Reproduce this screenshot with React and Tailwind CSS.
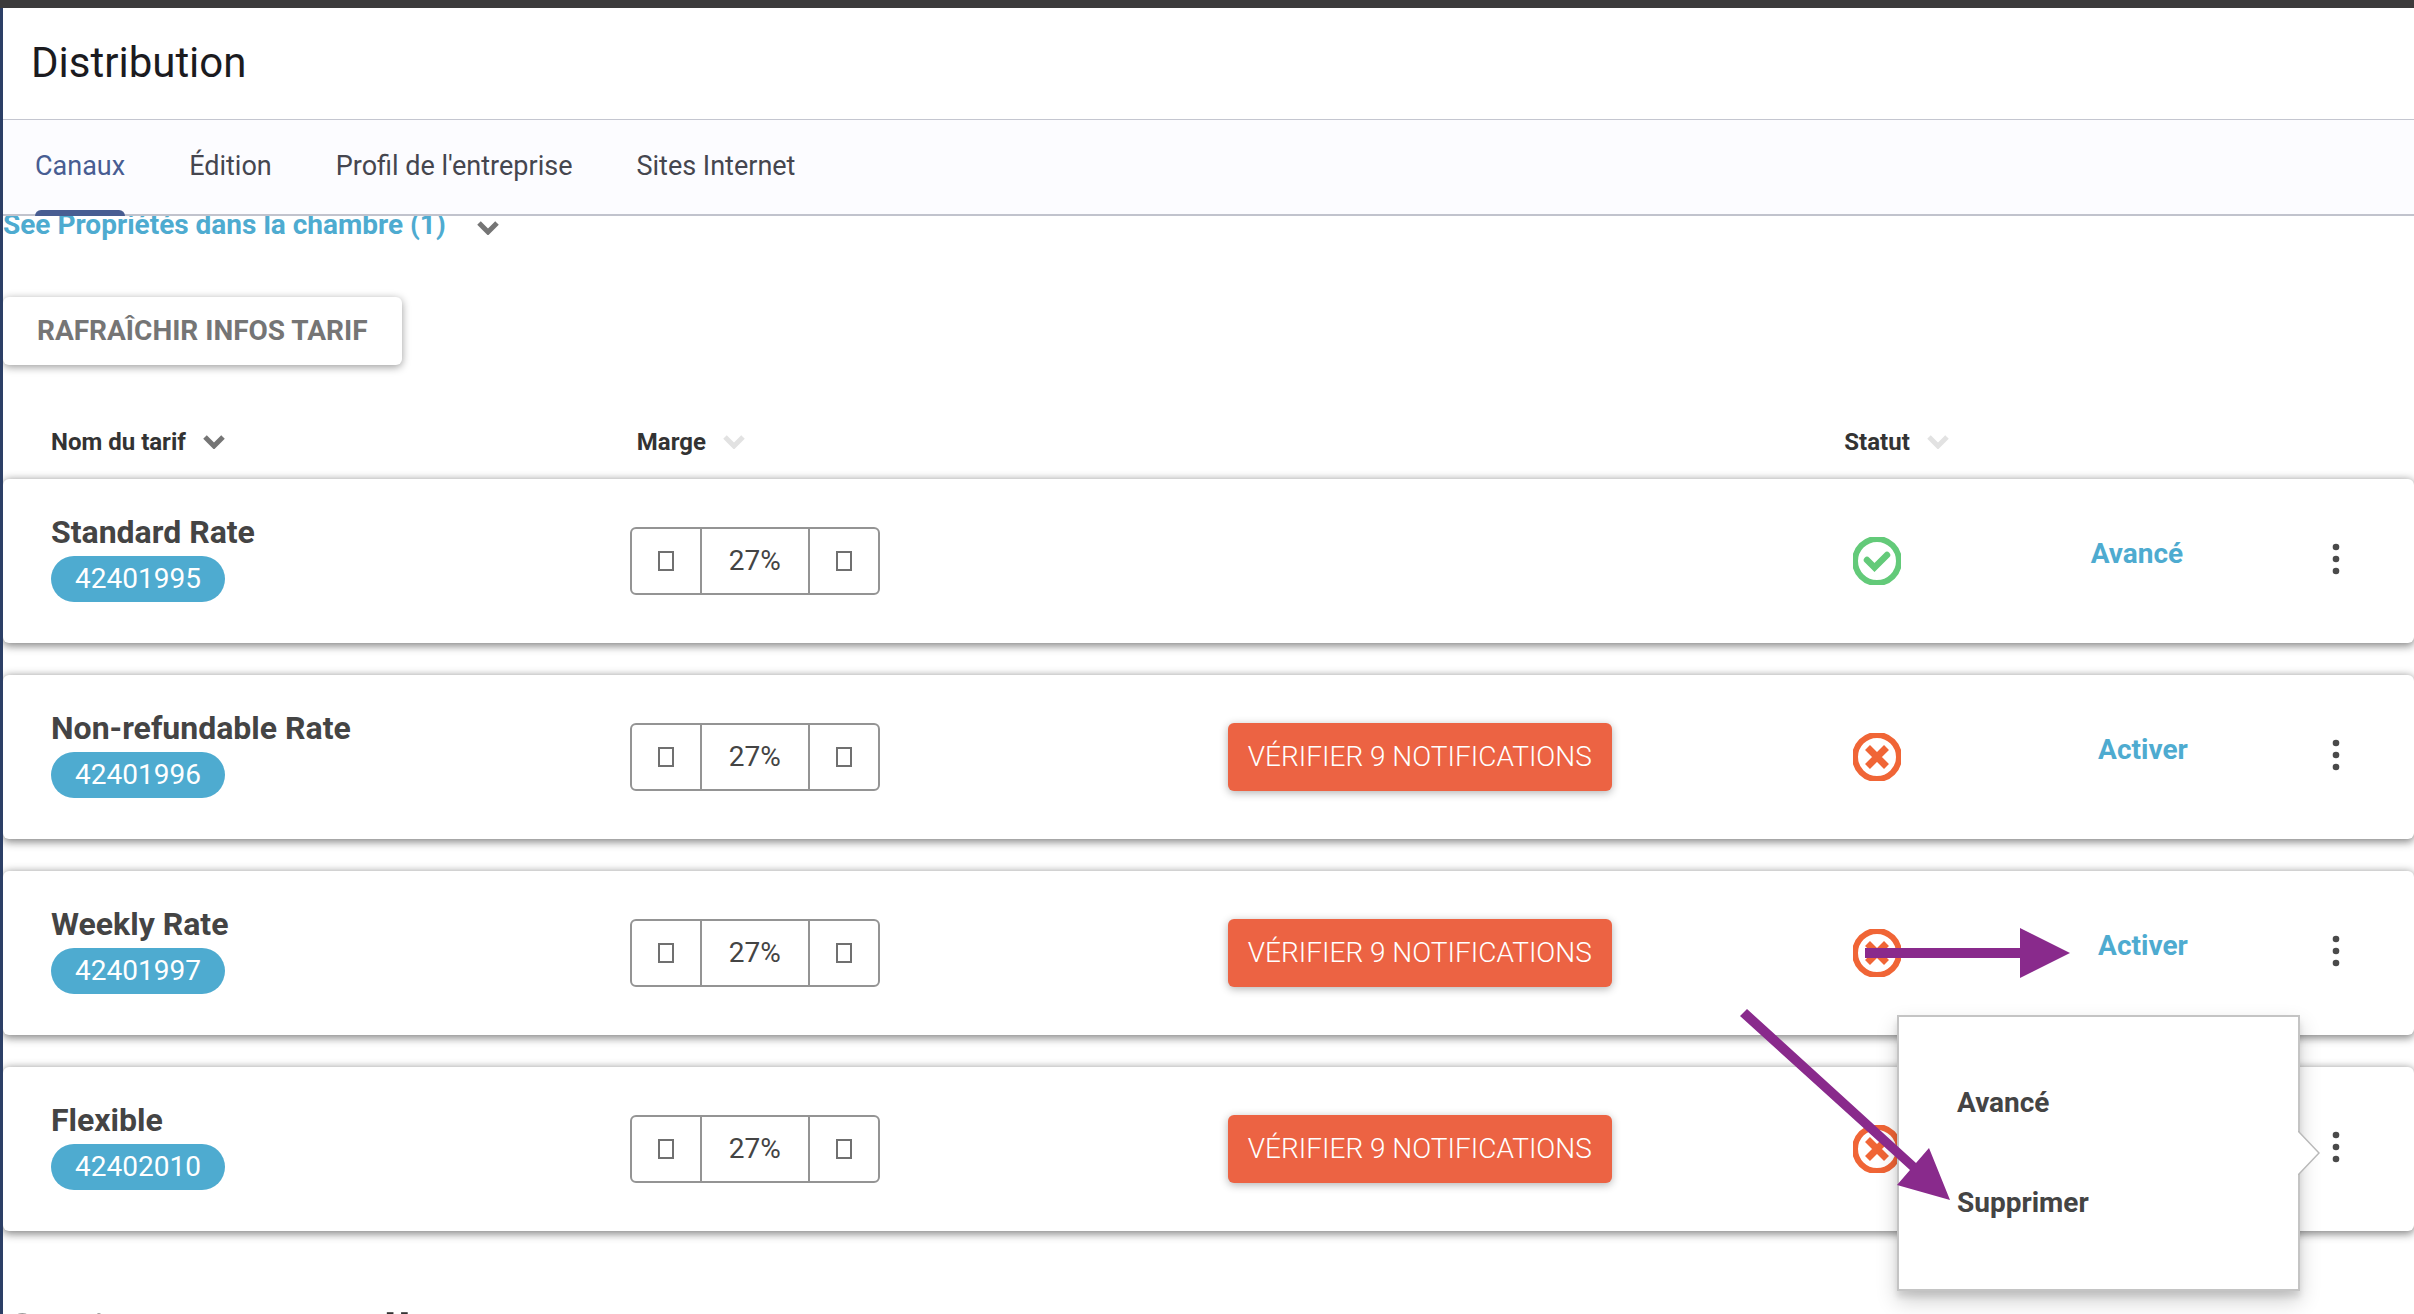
import React, { useState } from "react";

const TABS = ["Canaux", "Édition", "Profil de l'entreprise", "Sites Internet"];

const RATES = [
  { id: "42401995", name: "Standard Rate", margin: 27, active: true, notifications: 0 },
  { id: "42401996", name: "Non-refundable Rate", margin: 27, active: false, notifications: 9 },
  { id: "42401997", name: "Weekly Rate", margin: 27, active: false, notifications: 9 },
  { id: "42402010", name: "Flexible", margin: 27, active: false, notifications: 9 },
];

const Chevron = ({ className }) => (
  <svg className={className} width="24" height="14" viewBox="0 0 24 14" fill="none" aria-hidden="true">
    <path d="M3 2l9 9 9-9" stroke="currentColor" strokeWidth="5" />
  </svg>
);

const StatusIcon = ({ active }) =>
  active ? (
    <svg className="text-[#63ca79]" width="48" height="48" viewBox="0 0 48 48" fill="none" role="img" aria-label="Actif">
      <circle cx="24" cy="24" r="22" stroke="currentColor" strokeWidth="6" />
      <path d="M14 23l7.5 7.5 12.5-12.5" stroke="currentColor" strokeWidth="6.5" strokeLinecap="round" />
    </svg>
  ) : (
    <svg className="text-[#f06536]" width="48" height="48" viewBox="0 0 48 48" fill="none" role="img" aria-label="Inactif">
      <circle cx="24" cy="24" r="22" stroke="currentColor" strokeWidth="6" />
      <path d="M14.5 14.5l19 19M33.5 14.5l-19 19" stroke="currentColor" strokeWidth="7" />
    </svg>
  );

const SortHeader = ({ label, sorted }) => (
  <button className="flex h-[14px] items-center gap-4 pt-[3px] leading-[14px] font-bold">
    {label}
    <Chevron className={sorted ? "text-[#757575]" : "text-[#e2e2e2]"} />
  </button>
);

const MarginStepper = ({ value }) => (
  <div className="flex h-[68px] w-[250px] divide-x-2 divide-[#949494] rounded-md border-2 border-[#949494]">
    <button className="flex w-[70px] items-center justify-center" aria-label="Diminuer la marge">
      <span className="h-5 w-4 border-2 border-[#707070]" />
    </button>
    <span className="flex flex-1 items-center justify-center text-[28px]">{value}%</span>
    <button className="flex w-[68px] items-center justify-center" aria-label="Augmenter la marge">
      <span className="h-5 w-4 border-2 border-[#707070]" />
    </button>
  </div>
);

const RateMenu = () => (
  <div className="absolute -top-[52px] right-[114px] z-10 flex h-[276px] w-[403px] flex-col items-start justify-center gap-[68px] border-2 border-[#c4c4c4] bg-white pl-[58px] shadow-[0_10px_20px_rgba(0,0,0,0.19),0_6px_6px_rgba(0,0,0,0.1)]">
    <button className="text-[28px] leading-8 font-bold">Avancé</button>
    <button className="text-[28px] leading-8 font-bold">Supprimer</button>
    <svg className="absolute top-[114px] -right-[22px]" width="22" height="44" viewBox="0 0 22 44" aria-hidden="true">
      <path d="M0 0L21 22L0 44" fill="#fff" stroke="#b9b9b9" strokeWidth="1.5" />
    </svg>
  </div>
);

const RateRow = ({ rate, menuOpen, onToggleMenu }) => (
  <tr className="h-[164px] rounded-md shadow-[0_4px_8px_rgba(0,0,0,0.3),0_0_8px_rgba(0,0,0,0.3)]">
    <td className="p-0 pb-1 pl-12">
      <div className="text-[32px] leading-8 font-bold">{rate.name}</div>
      <span className="mt-2 flex h-[46px] w-fit items-center rounded-full bg-[#4eabd0] px-6 text-[28px] text-white">
        {rate.id}
      </span>
    </td>
    <td className="p-0">
      <MarginStepper value={rate.margin} />
    </td>
    <td className="p-0">
      {rate.notifications > 0 && (
        <button className="h-[68px] rounded-md bg-[#ec6343] px-5 text-[28px] font-light text-white uppercase shadow-[0_2px_8px_rgba(0,0,0,0.3)]">
          Vérifier {rate.notifications} notifications
        </button>
      )}
    </td>
    <td className="p-0 pl-[18px]">
      <StatusIcon active={rate.active} />
    </td>
    <td className={rate.active ? "p-0 pr-[14px] pb-[14px] text-center" : "p-0 pr-[2px] pb-[14px] text-center"}>
      <button className="text-[28px] leading-8 font-bold text-[#4eabd0]">
        {rate.active ? "Avancé" : "Activer"}
      </button>
    </td>
    <td className="relative p-0 pb-1 pl-[84px]">
      <button className="flex h-12 w-6 items-center justify-center" aria-label="Plus d'options" onClick={onToggleMenu}>
        <svg width="8" height="34" viewBox="0 0 8 34" fill="#4a4a4a" aria-hidden="true">
          <circle cx="4" cy="5" r="3.3" />
          <circle cx="4" cy="17" r="3.3" />
          <circle cx="4" cy="29" r="3.3" />
        </svg>
      </button>
      {menuOpen && <RateMenu />}
    </td>
  </tr>
);

const GuideArrows = () => (
  <svg className="pointer-events-none absolute top-[912px] right-[334px] z-20" width="340" height="290" viewBox="1740 920 340 290" fill="#892a8c" aria-hidden="true">
    <path d="M1865 948H2020V928L2070 953L2020 978V958H1865z" />
    <path d="M1740 1016L1747 1009L1916 1163L1929 1148L1950 1200L1897 1185L1910 1170z" />
  </svg>
);

const App = () => {
  const [tab, setTab] = useState(TABS[0]);
  const [openMenu, setOpenMenu] = useState("42402010");

  return (
    <div className="relative flex h-screen flex-col overflow-hidden border-t-8 border-[#3c3b3c] bg-white font-['Roboto',sans-serif] text-[#444]">
      <div className="flex min-h-0 flex-1 flex-col border-l-3 border-[#2c3f66]">
        <header className="shrink-0 bg-white">
          <h1 className="flex h-[112px] items-center border-b border-[#c4c6d0] pb-[2px] pl-7 text-[42px] text-[#1b1b1f]">
            Distribution
          </h1>
          <nav className="flex h-24 gap-16 border-b-2 border-[#c1c3cd] bg-[#fcfcff] pl-8">
            {TABS.map((item) => (
              <button
                key={item}
                className={`relative h-24 pb-1 text-[27px] ${item === tab ? "text-[#485d92]" : "text-[#45464f]"}`}
                onClick={() => setTab(item)}
              >
                {item}
                {item === tab && (
                  <span className="absolute inset-x-0 bottom-0 h-[6px] rounded-t-md bg-[#485d92]" />
                )}
              </button>
            ))}
          </nav>
        </header>

        <main className="min-h-0 flex-1 overflow-hidden">
          <button className="-mt-[7px] flex h-8 items-center gap-[30px] text-[28px] leading-8 font-bold text-[#4eabd0]">
            See Propriétés dans la chambre (1)
            <Chevron className="mt-[6px] text-[#757575]" />
          </button>

          <button className="mt-14 flex h-[68px] items-center rounded-md px-[34px] text-[28px] font-bold text-[#757575] uppercase shadow-[0_2px_8px_rgba(0,0,0,0.4)]">
            Rafraîchir infos tarif
          </button>

          <table className="mt-9 w-full table-fixed border-separate border-spacing-x-0 border-spacing-y-8">
            <thead>
              <tr className="text-left text-2xl leading-[14px] text-[#333]">
                <th className="w-[26%] p-0 pl-12">
                  <SortHeader label="Nom du tarif" sorted />
                </th>
                <th className="w-[24.8%] p-0 pl-[7px]">
                  <SortHeader label="Marge" />
                </th>
                <th className="w-[25.2%] p-0" />
                <th className="w-[8.8%] p-0 pl-[9px]">
                  <SortHeader label="Statut" />
                </th>
                <th className="w-[8%] p-0" />
                <th className="p-0" />
              </tr>
            </thead>
            <tbody>
              {RATES.map((rate) => (
                <RateRow
                  key={rate.id}
                  rate={rate}
                  menuOpen={openMenu === rate.id}
                  onToggleMenu={() => setOpenMenu(openMenu === rate.id ? null : rate.id)}
                />
              ))}
            </tbody>
          </table>

          <h2 className="mt-10 text-[56px] leading-[64px] font-medium text-[#333]">Options manuelles</h2>
        </main>
      </div>
      <GuideArrows />
    </div>
  );
};

export default App;
